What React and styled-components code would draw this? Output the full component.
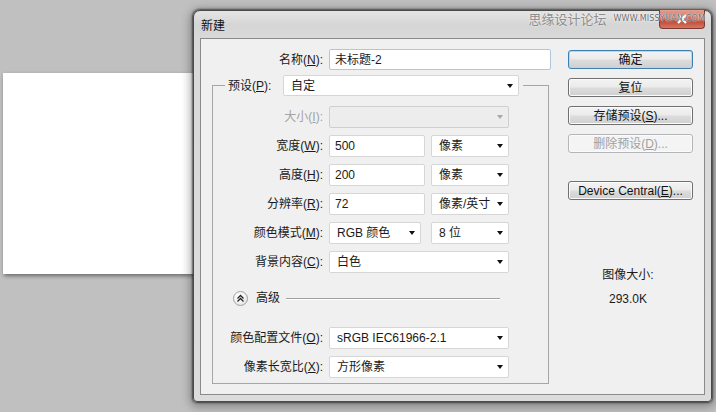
import styled, { createGlobalStyle } from 'styled-components'

const GlobalStyle = createGlobalStyle`
  html, body {
    margin: 0;
    padding: 0;
  }
  body {
    background: #c0c0c0;
    font-family: "Liberation Sans", "Noto Sans CJK SC", sans-serif;
    font-size: 12px;
    color: #1a1a1a;
  }
  * { box-sizing: border-box; }
`

const Desktop = styled.div`
  position: relative;
  width: 716px;
  height: 412px;
  overflow: hidden;
  background: #c0c0c0;
`

const Canvas = styled.div`
  position: absolute;
  left: 3px;
  top: 73px;
  width: 200px;
  height: 201px;
  background: #fff;
  box-shadow: 1px 2px 4px rgba(0, 0, 0, 0.45);
`

const Window = styled.div`
  position: absolute;
  left: 193px;
  top: 10px;
  width: 519px;
  height: 392px;
  display: flex;
  flex-direction: column;
  padding: 0 6px 6px;
  border: 1px solid #4a4a4a;
  border-radius: 7px 7px 4px 4px;
  background: linear-gradient(180deg, #e4e4e4 0px, #d5d5d5 14px, #d9d9d9 28px, #dcdcdc 100%);
  box-shadow: 0 0 2px 1px rgba(0, 0, 0, 0.55), 0 2px 10px 3px rgba(0, 0, 0, 0.3);
`

const TitleBar = styled.div`
  position: relative;
  height: 27px;
  display: flex;
  align-items: center;
  padding-left: 1px;
  font-size: 12px;
  color: #111;
`

const CloseButton = styled.div`
  position: absolute;
  right: 0;
  top: -1px;
  width: 46px;
  height: 19px;
  display: flex;
  align-items: center;
  justify-content: center;
  border: 1px solid #7a3a32;
  border-top: none;
  border-radius: 0 0 4px 4px;
  background: linear-gradient(180deg, #e3a293 0%, #cf6a58 45%, #c0402c 55%, #d47864 100%);
`

const Watermark = styled.div`
  position: absolute;
  right: 0;
  top: -2px;
  display: flex;
  align-items: center;
  gap: 7px;
  pointer-events: none;

  .cn {
    font-family: "Noto Sans CJK SC", sans-serif;
    font-size: 13px;
    color: #8c8c8c;
    text-shadow: 0 0 2px #fff;
  }
  .url {
    font-family: "DejaVu Sans", sans-serif;
    font-size: 8px;
    letter-spacing: 0.2px;
    color: #6a6a6a;
    text-shadow: 0 0 1px #fff, 0 0 2px #fff;
  }
`

const Client = styled.div`
  flex: 1;
  display: flex;
  padding: 10px 0 0 11px;
  border: 1px solid #8a8a8a;
  background: #f0f0f0;
`

const LeftColumn = styled.div`
  width: 339px;
  display: flex;
  flex-direction: column;
`

const NameRow = styled.div`
  display: grid;
  grid-template-columns: 111px 222px;
  column-gap: 6px;
  align-items: center;
  height: 21px;
`

const Label = styled.span`
  text-align: right;
  white-space: nowrap;
  color: ${p => (p.$disabled ? '#a3a3a3' : '#1a1a1a')};
  line-height: 16px;

  u {
    text-underline-offset: 1px;
  }
`

const Field = styled.div`
  height: ${p => p.$h || 22}px;
  display: flex;
  align-items: center;
  padding-left: 5px;
  background: #fff;
  border: 1px solid ${p => (p.$focus ? '#b3c6d8' : '#d6d6d6')};
  border-radius: 2px;
  white-space: nowrap;
  line-height: 16px;
`

const SelectBox = styled.div`
  height: ${p => p.$h || 22}px;
  display: flex;
  align-items: center;
  justify-content: space-between;
  padding: 0 5px 0 7px;
  background: ${p => (p.$disabled ? '#ededed' : '#fff')};
  border: 1px solid ${p => (p.$disabled ? '#cfcfcf' : '#d6d6d6')};
  border-radius: 2px;
  white-space: nowrap;
  line-height: 16px;
`

const Arrow = styled.span`
  width: 0;
  height: 0;
  border-left: 3.5px solid transparent;
  border-right: 3.5px solid transparent;
  border-top: 4px solid ${p => (p.$disabled ? '#a8a8a8' : '#111')};
`

const Select = ({ children, disabled, h }) => (
  <SelectBox $disabled={disabled} $h={h}>
    <span>{children}</span>
    <Arrow $disabled={disabled} />
  </SelectBox>
)

const Group = styled.fieldset`
  margin: 5px 0 0;
  width: 337px;
  padding: 10px 12px 5px 12px;
  border: 1px solid #a6a6a6;
  min-width: 0;
`

const Legend = styled.legend`
  padding: 0 4px 0 3px;
`

const LegendInner = styled.div`
  display: flex;
  align-items: center;
  gap: 4px;

  ${Label} {
    width: 51px;
    text-align: left;
  }
`

const PresetSlot = styled.div`
  width: 236px;
`

const Row = styled.div`
  display: grid;
  grid-template-columns: 98px 180px;
  column-gap: 6px;
  align-items: center;
  margin-bottom: ${p => p.$gap ?? 7}px;
`

const Pair = styled.div`
  display: grid;
  grid-template-columns: ${p => p.$cols};
  justify-content: space-between;
`

const Advanced = styled.div`
  display: flex;
  align-items: center;
  height: 16px;
  margin: 17px 0 21px;
  padding-left: 8px;
`

const Toggle = styled.div`
  width: 15px;
  height: 15px;
  display: flex;
  align-items: center;
  justify-content: center;
  border-radius: 50%;
  border: 1px solid #a2a2a2;
  background: radial-gradient(circle at 40% 35%, #ffffff 0%, #f2f2f2 50%, #d6d6d6 100%);
`

const AdvancedText = styled.span`
  margin-left: 8px;
  line-height: 16px;
`

const Rule = styled.div`
  flex: 1;
  height: 2px;
  margin: 1px 36px 0 6px;
  border-top: 1px solid #a0a0a0;
  border-bottom: 1px solid #fff;
`

const RightColumn = styled.div`
  width: 125px;
  margin-left: 17px;
  display: flex;
  flex-direction: column;
  padding-top: 1px;
`

const Button = styled.div`
  height: 19px;
  margin-top: ${p => p.$gap ?? 9}px;
  display: flex;
  align-items: center;
  justify-content: center;
  border: 1px solid ${p => (p.$default ? '#3c7fb1' : p.$disabled ? '#b3b6b9' : '#707070')};
  border-radius: 3px;
  color: ${p => (p.$disabled ? '#a0a0a0' : '#111')};
  background: ${p =>
    p.$disabled
      ? '#f4f4f4'
      : 'linear-gradient(180deg, #f3f3f3 0%, #ebebeb 48%, #dddddd 52%, #cfcfcf 100%)'};
  box-shadow: inset 0 0 0 1px ${p => (p.$default ? '#a9dcf5' : '#fbfbfb')};
  white-space: nowrap;
  line-height: 16px;

  &:first-child {
    margin-top: 0;
  }
`

const Info = styled.div`
  margin-top: 67px;
  display: flex;
  flex-direction: column;
  align-items: center;
  gap: 8px;
  line-height: 16px;
  padding-right: 5px;
`

export default function App() {
  return (
    <>
      <GlobalStyle />
      <Desktop>
        <Canvas />
        <Window>
          <TitleBar>
            新建
            <CloseButton>
              <svg width="12" height="10" viewBox="0 0 12 10">
                <path d="M2 1 L10 9 M10 1 L2 9" stroke="#fff" strokeWidth="2.2" />
              </svg>
            </CloseButton>
            <Watermark>
              <span className="cn">思缘设计论坛</span>
              <span className="url">WWW.MISSYUAN.COM</span>
            </Watermark>
          </TitleBar>

          <Client>
            <LeftColumn>
              <NameRow>
                <Label>名称(<u>N</u>):</Label>
                <Field $focus $h={21}>未标题-2</Field>
              </NameRow>

              <Group>
                <Legend>
                  <LegendInner>
                    <Label>预设(<u>P</u>):</Label>
                    <PresetSlot>
                      <Select h={21}>自定</Select>
                    </PresetSlot>
                  </LegendInner>
                </Legend>

                <Row>
                  <Label $disabled>大小(<u>I</u>):</Label>
                  <Select disabled> </Select>
                </Row>
                <Row>
                  <Label>宽度(<u>W</u>):</Label>
                  <Pair $cols="96px 78px">
                    <Field>500</Field>
                    <Select>像素</Select>
                  </Pair>
                </Row>
                <Row>
                  <Label>高度(<u>H</u>):</Label>
                  <Pair $cols="96px 78px">
                    <Field>200</Field>
                    <Select>像素</Select>
                  </Pair>
                </Row>
                <Row>
                  <Label>分辨率(<u>R</u>):</Label>
                  <Pair $cols="96px 78px">
                    <Field>72</Field>
                    <Select>像素/英寸</Select>
                  </Pair>
                </Row>
                <Row>
                  <Label>颜色模式(<u>M</u>):</Label>
                  <Pair $cols="92px 78px">
                    <Select>RGB 颜色</Select>
                    <Select>8 位</Select>
                  </Pair>
                </Row>
                <Row $gap={0}>
                  <Label>背景内容(<u>C</u>):</Label>
                  <Select>白色</Select>
                </Row>

                <Advanced>
                  <Toggle>
                    <svg width="9" height="9" viewBox="0 0 9 9">
                      <path d="M1.5 4.5 L4.5 1.5 L7.5 4.5 M1.5 7.5 L4.5 4.5 L7.5 7.5" fill="none" stroke="#222" strokeWidth="1.3" />
                    </svg>
                  </Toggle>
                  <AdvancedText>高级</AdvancedText>
                  <Rule />
                </Advanced>

                <Row>
                  <Label>颜色配置文件(<u>O</u>):</Label>
                  <Select>sRGB IEC61966-2.1</Select>
                </Row>
                <Row $gap={0}>
                  <Label>像素长宽比(<u>X</u>):</Label>
                  <Select>方形像素</Select>
                </Row>
              </Group>
            </LeftColumn>

            <RightColumn>
              <Button $default>确定</Button>
              <Button>复位</Button>
              <Button>存储预设(<u>S</u>)...</Button>
              <Button $disabled>删除预设(<u>D</u>)...</Button>
              <Button $gap={28}>Device Central(<u>E</u>)...</Button>
              <Info>
                <span>图像大小:</span>
                <span>293.0K</span>
              </Info>
            </RightColumn>
          </Client>
        </Window>
      </Desktop>
    </>
  )
}
